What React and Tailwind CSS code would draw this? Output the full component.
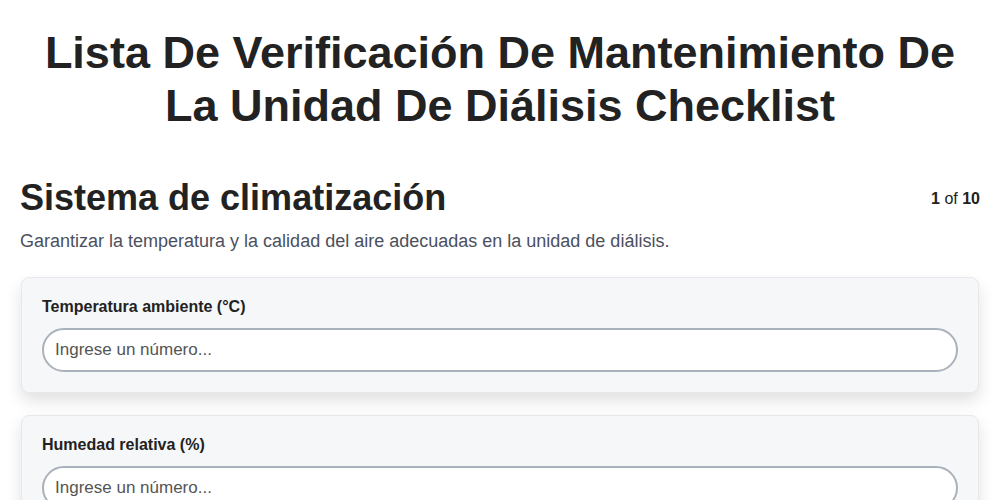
import React from 'react';

const fields = [
  { label: 'Temperatura ambiente (°C)' },
  { label: 'Humedad relativa (%)' },
];

export default function App() {
  return (
    <div className="min-h-screen bg-white text-[#222] font-['Liberation_Sans',Arial,sans-serif]">
      <h1 className="px-8 pt-[26px] text-center text-[45px] font-bold leading-[53px] text-[#222]">
        Lista De Verificación De Mantenimiento De La Unidad De Diálisis Checklist
      </h1>

      <section className="px-5 pt-[44px]">
        <div className="flex items-start justify-between">
          <h2 className="text-[36px] font-bold leading-[44px] text-[#222]">Sistema de climatización</h2>
          <span className="pt-[11px] text-base text-[#222]">
            <b>1</b> of <b>10</b>
          </span>
        </div>
        <p className="mt-2 text-[18px] leading-[27px] text-[#4b5060]">
          Garantizar la temperatura y la calidad del aire adecuadas en la unidad de diálisis.
        </p>

        <div className="mt-[22px] flex flex-col gap-[22px] px-px">
          {fields.map((f) => (
            <div
              key={f.label}
              className="rounded-lg border border-[#e6e8eb] bg-[#f6f7f9] px-5 pt-[19px] pb-5 shadow-[0_8px_16px_rgba(0,0,0,0.12)]"
            >
              <label className="block text-base font-bold leading-[20px] text-[#222]">{f.label}</label>
              <input
                type="text"
                placeholder="Ingrese un número..."
                className="mt-[11px] block h-[44px] w-full rounded-full border-2 border-[#a9b1ba] bg-white px-[11px] text-[17px] text-[#222] placeholder:text-[#555] outline-none"
              />
            </div>
          ))}
        </div>
      </section>
    </div>
  );
}
